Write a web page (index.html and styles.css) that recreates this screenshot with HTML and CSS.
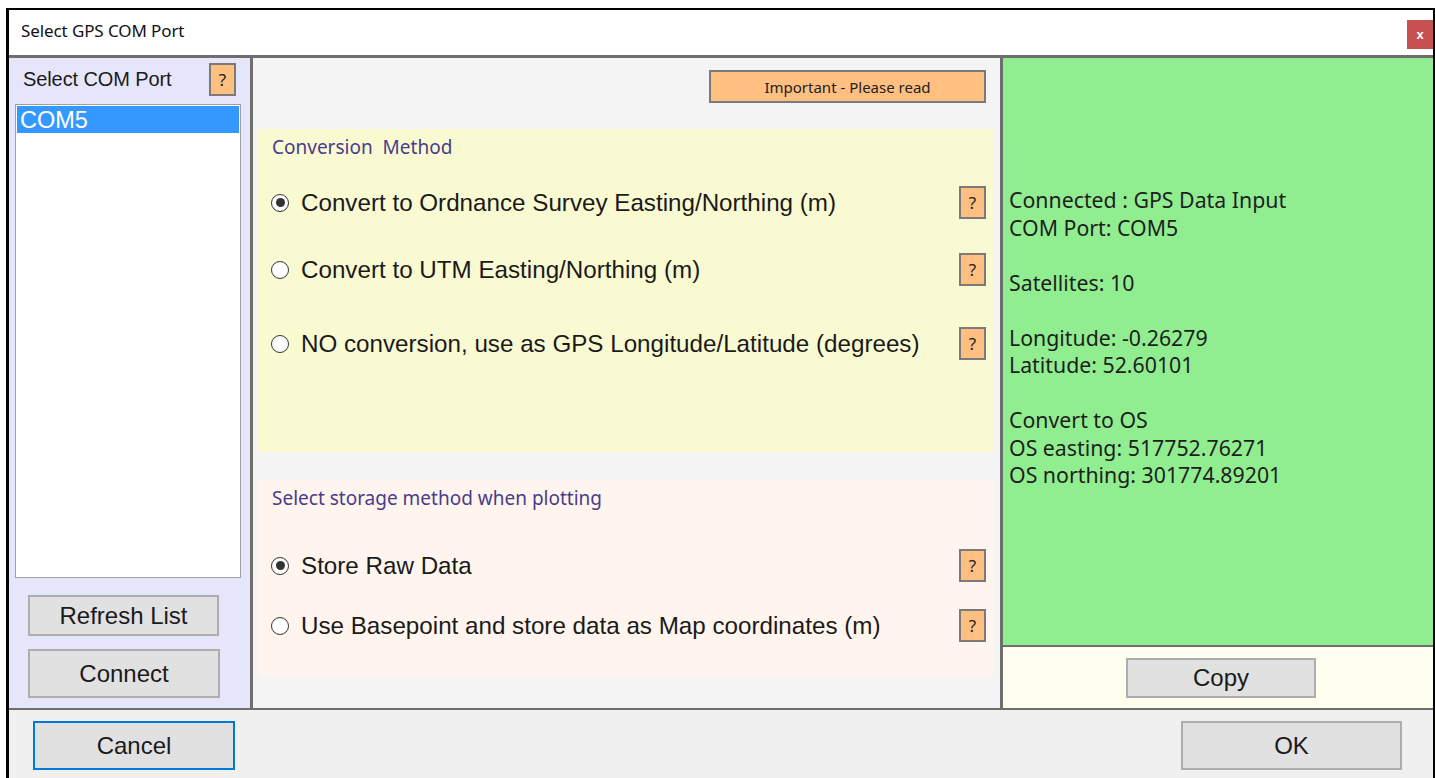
FILE: index.html
```html
<!DOCTYPE html>
<html lang="en">
<head>
<meta charset="utf-8">
<title>Select GPS COM Port</title>
<link rel="stylesheet" href="styles.css">
</head>
<body>
<div class="window">
  <div class="titlebar">
    <span class="title">Select GPS COM Port</span>
    <button class="close">x</button>
  </div>

  <div class="main">
    <!-- COM port picker -->
    <div class="ports">
      <div class="ports-head">
        <span class="ports-label">Select COM Port</span>
        <button class="help">?</button>
      </div>
      <div class="listbox">
        <div class="list-item selected">COM5</div>
      </div>
      <button class="btn btn-refresh">Refresh List</button>
      <button class="btn btn-connect">Connect</button>
    </div>

    <!-- conversion / storage options -->
    <div class="options">
      <div class="notice-row">
        <button class="notice">Important - Please read</button>
      </div>

      <section class="group group-convert">
        <div class="group-label">Conversion&nbsp; Method</div>
        <div class="opt-row first">
          <span class="radio checked"></span>
          <span class="opt-text">Convert to Ordnance Survey Easting/Northing (m)</span>
          <button class="help">?</button>
        </div>
        <div class="opt-row">
          <span class="radio"></span>
          <span class="opt-text">Convert to UTM Easting/Northing (m)</span>
          <button class="help">?</button>
        </div>
        <div class="opt-row wide">
          <span class="radio"></span>
          <span class="opt-text">NO conversion, use as GPS Longitude/Latitude (degrees)</span>
          <button class="help">?</button>
        </div>
      </section>

      <section class="group group-store">
        <div class="group-label">Select storage method when plotting</div>
        <div class="opt-row first">
          <span class="radio checked"></span>
          <span class="opt-text">Store Raw Data</span>
          <button class="help">?</button>
        </div>
        <div class="opt-row">
          <span class="radio"></span>
          <span class="opt-text">Use Basepoint and store data as Map coordinates (m)</span>
          <button class="help">?</button>
        </div>
      </section>
    </div>

    <!-- live GPS readout -->
    <div class="status">
      <div class="readout">Connected : GPS Data Input
COM Port: COM5

Satellites: 10

Longitude: -0.26279
Latitude: 52.60101

Convert to OS
OS easting: 517752.76271
OS northing: 301774.89201</div>
      <div class="copy-bar">
        <button class="btn btn-copy">Copy</button>
      </div>
    </div>
  </div>

  <div class="footer">
    <button class="btn btn-cancel">Cancel</button>
    <button class="btn btn-ok">OK</button>
  </div>
</div>
</body>
</html>
```

FILE: styles.css
```css
* {
  box-sizing: border-box;
}

body {
  margin: 0;
  background: #ffffff;
  font-family: "Liberation Sans", Arial, sans-serif;
  color: #1a1a1a;
}

button {
  font: inherit;
  color: inherit;
  padding: 0;
  margin: 0;
}

.window {
  margin: 8px 0 0 6px;
  width: 1429px;
  height: 770px;
  border-top: 2px solid #000;
  border-left: 3px solid #000;
  border-right: 2px solid #000;
  display: flex;
  flex-direction: column;
  overflow: hidden;
}

/* title bar */
.titlebar {
  height: 48px;
  flex: none;
  background: #ffffff;
  border-bottom: 3px solid #6e6e6e;
  display: flex;
  justify-content: space-between;
  align-items: flex-start;
}

.title {
  font-family: "Noto Sans", sans-serif;
  font-size: 17px;
  letter-spacing: -0.1px;
  margin: 9px 0 0 12px;
  color: #111;
}

.close {
  margin-top: 10px;
  width: 26px;
  height: 29px;
  border: none;
  background: #c75050;
  color: #fff;
  font-family: "Liberation Sans", sans-serif;
  font-weight: bold;
  font-size: 13px;
  line-height: 27px;
}

/* main body: three columns */
.main {
  height: 650px;
  flex: none;
  display: flex;
}

.ports {
  width: 244px;
  flex: none;
  background: #e6e6fa;
  border-right: 3px solid #6e6e6e;
  display: flex;
  flex-direction: column;
}

.ports-head {
  height: 46px;
  display: flex;
  justify-content: space-between;
  align-items: flex-start;
  padding: 5px 14px 0 14px;
}

.ports-label {
  font-size: 20px;
  letter-spacing: -0.1px;
  margin-top: 5px;
}

.help {
  width: 27px;
  height: 33px;
  flex: none;
  background: #ffbf80;
  border: 2px solid #7a7a7a;
  font-family: "Noto Sans", sans-serif;
  font-size: 17px;
  line-height: 28px;
  color: #222;
}

.listbox {
  margin-left: 6px;
  width: 226px;
  height: 474px;
  background: #ffffff;
  border: 1px solid #a0a0a0;
  padding: 1px;
}

.list-item {
  height: 27px;
  font-size: 23.5px;
  line-height: 28px;
  padding-left: 3px;
}

.list-item.selected {
  background: #3399ff;
  color: #ffffff;
}

.btn {
  background: #e1e1e1;
  border: 2px solid #adadad;
  font-family: "Liberation Sans", sans-serif;
  font-size: 24px;
  color: #1a1a1a;
}

.btn-refresh {
  margin: 17px 0 0 19px;
  width: 191px;
  height: 41px;
}

.btn-connect {
  margin: 13px 0 0 19px;
  width: 192px;
  height: 49px;
}

/* option panel */
.options {
  width: 750px;
  flex: none;
  background: #f4f4f4;
  border-right: 3px solid #6e6e6e;
  display: flex;
  flex-direction: column;
}

.notice-row {
  display: flex;
  justify-content: flex-end;
  padding: 12px 14px 0 0;
}

.notice {
  width: 277px;
  height: 33px;
  background: #ffbf80;
  border: 2px solid #7a7a7a;
  font-family: "Noto Sans", sans-serif;
  font-size: 15px;
  color: #222;
}

.group {
  margin-left: 5px;
  width: 735px;
  display: flex;
  flex-direction: column;
  padding-right: 7px;
}

.group-convert {
  margin-top: 26px;
  height: 323px;
  background: #fafad2;
}

.group-store {
  margin-top: 28px;
  height: 197px;
  background: #fff5ee;
}

.group-label {
  height: 38px;
  padding: 5px 0 0 14px;
  font-family: "Noto Sans", sans-serif;
  font-size: 19px;
  color: #483d8b;
}

.opt-row {
  height: 33px;
  display: flex;
  align-items: center;
  margin-top: 34px;
}

.group-convert .opt-row.first {
  margin-top: 19px;
}

.group-convert .opt-row.wide {
  margin-top: 41px;
}

.group-store .opt-row.first {
  margin-top: 31px;
}

.group-store .opt-row {
  margin-top: 27px;
}

.radio {
  width: 18px;
  height: 18px;
  flex: none;
  margin-left: 13px;
  border: 1.5px solid #333;
  border-radius: 50%;
  background: #fff;
  display: flex;
  align-items: center;
  justify-content: center;
}

.radio.checked::after {
  content: "";
  width: 9px;
  height: 9px;
  border-radius: 50%;
  background: #333;
}

.opt-text {
  margin-left: 12px;
  flex: 1;
  font-size: 24.2px;
  color: #1a1a1a;
}

/* status panel */
.status {
  flex: 1;
  display: flex;
  flex-direction: column;
}

.readout {
  height: 589px;
  flex: none;
  background: #90ee90;
  border-bottom: 2px solid #6e6e6e;
  padding: 128px 0 0 6px;
  white-space: pre-line;
  font-family: "Noto Sans", sans-serif;
  font-size: 21.3px;
  line-height: 27.5px;
  color: #1e1e1e;
}

.copy-bar {
  flex: 1;
  background: #fffff0;
  display: flex;
  justify-content: center;
  padding: 11px 0 0 6px;
}

.btn-copy {
  width: 190px;
  height: 40px;
}

/* footer */
.footer {
  flex: 1;
  background: #f0f0f0;
  border-top: 2px solid #6e6e6e;
  display: flex;
  justify-content: space-between;
  align-items: flex-start;
  padding: 11px 31px 0 24px;
}

.btn-cancel {
  width: 202px;
  height: 49px;
  border-color: #0078d7;
}

.btn-ok {
  width: 221px;
  height: 49px;
}
```
